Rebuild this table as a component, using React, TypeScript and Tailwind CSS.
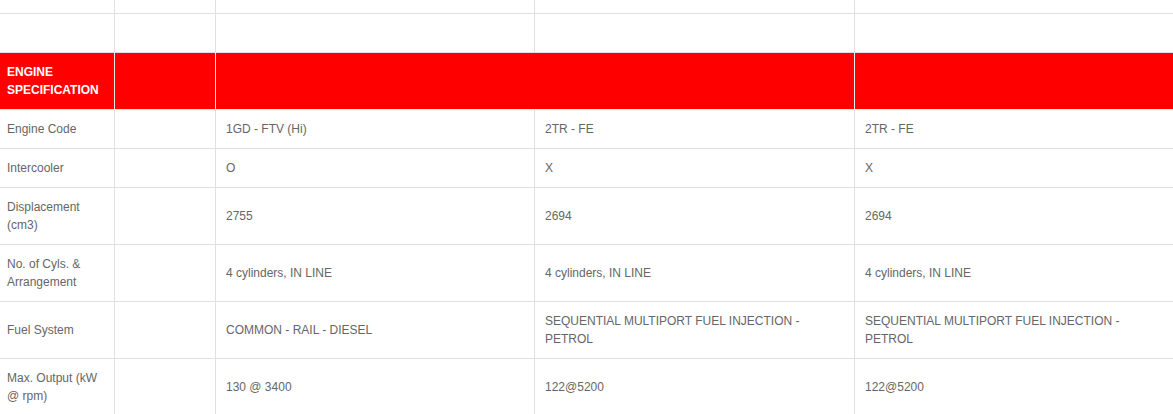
import React from "react";

type Row = { label: string; values: [string, string, string] };

const rows: Row[] = [
  { label: "Engine Code", values: ["1GD - FTV (Hi)", "2TR - FE", "2TR - FE"] },
  { label: "Intercooler", values: ["O", "X", "X"] },
  { label: "Displacement (cm3)", values: ["2755", "2694", "2694"] },
  { label: "No. of Cyls. & Arrangement", values: ["4 cylinders, IN LINE", "4 cylinders, IN LINE", "4 cylinders, IN LINE"] },
  {
    label: "Fuel System",
    values: ["COMMON - RAIL - DIESEL", "SEQUENTIAL MULTIPORT FUEL INJECTION - PETROL", "SEQUENTIAL MULTIPORT FUEL INJECTION - PETROL"],
  },
  { label: "Max. Output (kW @ rpm)", values: ["130 @ 3400", "122@5200", "122@5200"] },
];

const cols = "grid grid-cols-[115px_101px_319px_320px_1fr]";

export default function App() {
  return (
    <div
      className="w-[1173px] h-[414px] overflow-hidden bg-white text-[12px] leading-[18px] text-[#666]"
      style={{ fontFamily: '"Liberation Sans", Arial, sans-serif' }}
    >
      {/* partial top row */}
      <div className={`${cols} h-[14px]`}>
        <div className="border-r border-b border-[#e0e0e0]" />
        <div className="border-r border-b border-[#e0e0e0]" />
        <div className="border-r border-b border-[#e0e0e0]" />
        <div className="border-r border-b border-[#e0e0e0]" />
        <div className="border-b border-[#e0e0e0]" />
      </div>
      {/* empty row */}
      <div className={`${cols} h-[39px]`}>
        <div className="border-r border-b border-[#e0e0e0]" />
        <div className="border-r border-b border-[#e0e0e0]" />
        <div className="border-r border-b border-[#e0e0e0]" />
        <div className="border-r border-b border-[#e0e0e0]" />
        <div className="border-b border-[#e0e0e0]" />
      </div>
      {/* red header */}
      <div className="grid grid-cols-[115px_101px_639px_1fr] bg-[#ff0000]">
        <div className="border-r border-b border-[#e8e8e8] pl-[7px] pr-2 py-[10px] text-[12px] font-bold text-white">
          ENGINE SPECIFICATION
        </div>
        <div className="border-r border-b border-[#e8e8e8]" />
        <div className="border-r border-b border-[#f0f0f0]" />
        <div className="border-b border-[#f0f0f0]" />
      </div>
      {rows.map((r) => (
        <div key={r.label} className={cols}>
          <div className="border-r border-b border-[#e0e0e0] pl-[7px] pr-2 py-[10px] flex items-center">
            <span>{r.label}</span>
          </div>
          <div className="border-r border-b border-[#e0e0e0]" />
          <div className="border-r border-b border-[#e0e0e0] pl-[10px] pr-3 py-[10px] flex items-center">
            <span>{r.values[0]}</span>
          </div>
          <div className="border-r border-b border-[#e0e0e0] pl-[10px] pr-3 py-[10px] flex items-center">
            <span className="max-w-[270px]">{r.values[1]}</span>
          </div>
          <div className="border-b border-[#e0e0e0] pl-[10px] pr-3 py-[10px] flex items-center">
            <span className="max-w-[270px]">{r.values[2]}</span>
          </div>
        </div>
      ))}
    </div>
  );
}
